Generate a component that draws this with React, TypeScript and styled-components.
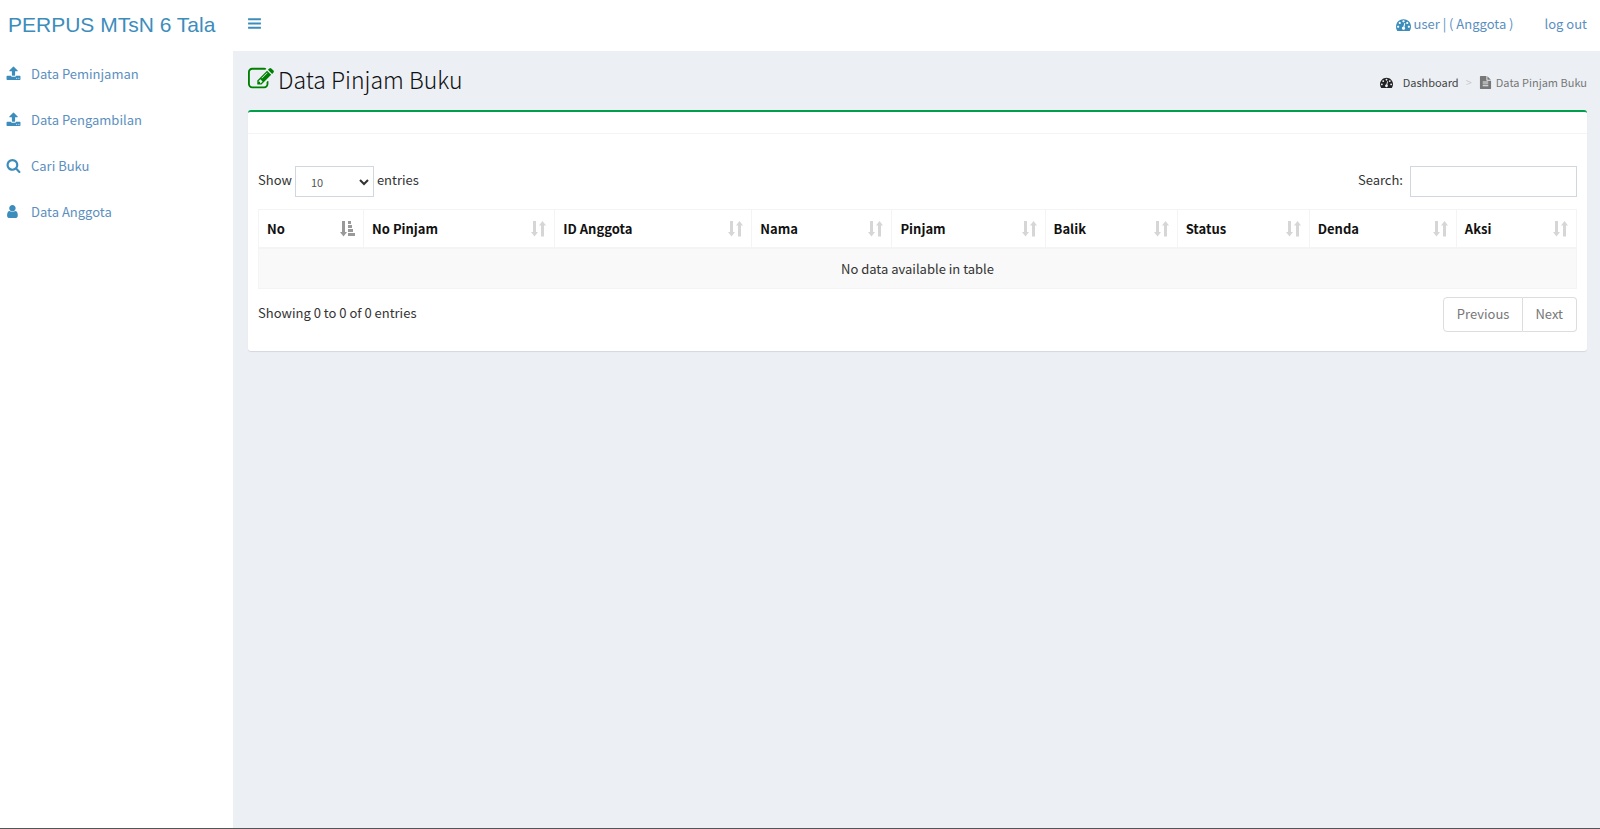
import React from "react";
import styled, { createGlobalStyle } from "styled-components";

const GlobalStyle = createGlobalStyle`
  * { box-sizing: border-box; }
  body {
    margin: 0;
    font-family: "Source Sans Pro", "Noto Sans CJK SC", "Noto Sans", sans-serif;
    font-size: 13px;
    line-height: 20px;
    color: #333;
  }
  a { text-decoration: none; }
`;

const Page = styled.div`
  min-height: 100vh;
  display: flex;
  flex-direction: column;
  background: #fff;
  border-bottom: 1px solid #555;
`;

const TopBar = styled.header`
  display: flex;
  align-items: center;
  height: 51px;
  padding-bottom: 2px;
  color: #3c8dbc;
`;

const Brand = styled.a`
  width: 233px;
  padding-left: 8px;
  font-family: "Liberation Sans", Arial, sans-serif;
  font-size: 21px;
  white-space: nowrap;
  color: #3c8dbc;
`;

const MenuButton = styled.button`
  display: flex;
  margin-right: auto;
  padding: 0 14px 2px;
  border: 0;
  background: none;
  color: inherit;
`;

const TopLink = styled.a`
  display: flex;
  align-items: center;
  gap: 3px;
  margin: 0 13px 1px 18px;
  color: #5b8fc0;
`;

const Body = styled.div`
  flex: 1;
  display: flex;
`;

const Sidebar = styled.nav`
  flex: none;
  width: 233px;
`;

const NavLink = styled.a`
  display: flex;
  align-items: center;
  gap: 10px;
  height: 46px;
  padding-left: 6px;
  color: #5b8fc0;
  svg {
    margin-bottom: 2px;
  }
`;

const Main = styled.main`
  flex: 1;
  min-width: 0;
  padding: 15px 13px 15px 15px;
  background: #ecf0f5;
`;

const TitleRow = styled.div`
  display: flex;
  align-items: center;
  justify-content: space-between;
  height: 28px;
  margin-bottom: 16px;
`;

const Title = styled.h1`
  display: flex;
  align-items: center;
  gap: 4px;
  margin: 0;
  padding-bottom: 2px;
  font-size: 23px;
  font-weight: 300;
  line-height: 28px;
  color: #111;
`;

const Crumbs = styled.ol`
  display: flex;
  align-items: center;
  gap: 7px;
  margin: 0;
  padding: 4px 0 0;
  list-style: none;
  font-size: 11px;
  color: #777;
`;

const Crumb = styled.li<{ $gap: number }>`
  display: flex;
  align-items: center;
  gap: ${(p) => p.$gap}px;
`;

const CrumbLink = styled.a`
  display: flex;
  align-items: center;
  gap: 10px;
  color: #444;
`;

const Separator = styled.span`
  color: #ccc;
`;

const Card = styled.section`
  border-top: 2px solid #00a04a;
  border-radius: 3px;
  background: #fff;
  box-shadow: 0 1px 1px rgba(0, 0, 0, 0.1);
`;

const CardHeader = styled.div`
  height: 22px;
  border-bottom: 1px solid #f4f4f4;
`;

const CardBody = styled.div`
  padding: 32px 10px 19px;
`;

const Bar = styled.div`
  display: flex;
  align-items: center;
  justify-content: space-between;
`;

const Field = styled.label<{ $gap: number }>`
  display: flex;
  align-items: center;
  gap: ${(p) => p.$gap}px;
`;

const BarText = styled.span`
  padding-bottom: 3px;
`;

const SelectWrap = styled.span`
  position: relative;
  display: flex;
`;

const Select = styled.select`
  appearance: none;
  width: 79px;
  height: 31px;
  padding: 0 15px;
  border: 1px solid #d2d6de;
  border-radius: 0;
  background: #fff;
  color: #555;
  font: inherit;
  font-size: 11px;
`;

const Chevron = styled.svg`
  position: absolute;
  right: 5px;
  top: 13px;
  pointer-events: none;
`;

const SearchInput = styled.input`
  width: 167px;
  height: 31px;
  border: 1px solid #d2d6de;
  padding: 4px 10px;
  font: inherit;
`;

const Table = styled.table`
  width: 100%;
  margin: 12px 0 8px;
  table-layout: fixed;
  border-collapse: separate;
  border-spacing: 0;
  border: 1px solid #f4f4f4;
  border-bottom: 0;
`;

const Col = styled.col<{ $w: number }>`
  width: ${(p) => p.$w}px;
`;

const Th = styled.th`
  height: 39px;
  padding: 0 8px;
  text-align: left;
  font-weight: 700;
  color: #111;
  border-bottom: 2px solid #f4f4f4;
  & + & {
    border-left: 1px solid #f4f4f4;
  }
`;

const HeadCell = styled.div`
  display: flex;
  align-items: center;
  justify-content: space-between;
`;

const EmptyCell = styled.td`
  height: 40px;
  padding: 0;
  text-align: center;
  background: #f9f9f9;
  border-bottom: 1px solid #f4f4f4;
`;

const Pager = styled.div`
  display: flex;
`;

const PageButton = styled.button`
  height: 35px;
  padding: 0 13px 2px;
  border: 1px solid #ddd;
  background: #fff;
  color: #777;
  font: inherit;
  &:first-child {
    border-radius: 4px 0 0 4px;
  }
  &:last-child {
    border-left: 0;
    padding-left: 12px;
    border-radius: 0 4px 4px 0;
  }
`;

const icons = {
  bars: "M1664 1344v128q0 26-19 45t-45 19h-1408q-26 0-45-19t-19-45v-128q0-26 19-45t45-19h1408q26 0 45 19t19 45zm0-512v128q0 26-19 45t-45 19h-1408q-26 0-45-19t-19-45v-128q0-26 19-45t45-19h1408q26 0 45 19t19 45zm0-512v128q0 26-19 45t-45 19h-1408q-26 0-45-19t-19-45v-128q0-26 19-45t45-19h1408q26 0 45 19t19 45z",
  upload:
    "M1344 1472q0-26-19-45t-45-19-45 19-19 45 19 45 45 19 45-19 19-45zm256 0q0-26-19-45t-45-19-45 19-19 45 19 45 45 19 45-19 19-45zm128-224v320q0 40-28 68t-68 28h-1472q-40 0-68-28t-28-68v-320q0-40 28-68t68-28h427q21 56 70.5 92t110.5 36h256q61 0 110.5-36t70.5-92h427q40 0 68 28t28 68zm-325-648q-17 40-59 40h-256v448q0 26-19 45t-45 19h-256q-26 0-45-19t-19-45v-448h-256q-42 0-59-40-17-39 14-69l448-448q18-19 45-19t45 19l448 448q31 30 14 69z",
  search:
    "M1216 832q0-185-131.5-316.5t-316.5-131.5-316.5 131.5-131.5 316.5 131.5 316.5 316.5 131.5 316.5-131.5 131.5-316.5zm512 832q0 52-38 90t-90 38q-54 0-90-38l-343-342q-179 124-399 124-143 0-273.5-55.5t-225-150-150-225-55.5-273.5 55.5-273.5 150-225 225-150 273.5-55.5 273.5 55.5 225 150 150 225 55.5 273.5q0 220-124 399l343 343q37 37 37 90z",
  user: "M1408 1399q0 109-62.5 187t-150.5 78h-854q-88 0-150.5-78t-62.5-187q0-85 8.5-160.5t31.5-152 58.5-131 94-89 134.5-34.5q131 128 313 128t313-128q76 0 134.5 34.5t94 89 58.5 131 31.5 152 8.5 160.5zm-256-887q0 159-112.5 271.5t-271.5 112.5-271.5-112.5-112.5-271.5 112.5-271.5 271.5-112.5 271.5 112.5 112.5 271.5z",
  edit: "M888 1184l116-116-152-152-116 116v56h96v96h56zm440-720q-16-16-33 1l-350 350q-17 17-1 33t33-1l350-350q17-17 1-33zm80 594v190q0 119-84.5 203.5t-203.5 84.5h-832q-119 0-203.5-84.5t-84.5-203.5v-832q0-119 84.5-203.5t203.5-84.5h832q63 0 117 25 15 7 18 23 3 17-9 29l-49 49q-14 14-32 8-23-6-45-6h-832q-66 0-113 47t-47 113v832q0 66 47 113t113 47h832q66 0 113-47t47-113v-126q0-13 9-22l64-64q15-15 35-7t20 29zm-96-738l288 288-672 672h-288v-288zm444 132l-92 92-288-288 92-92q28-28 68-28t68 28l152 152q28 28 28 68t-28 68z",
  dashboard:
    "M384 1152q0-53-37.5-90.5t-90.5-37.5-90.5 37.5-37.5 90.5 37.5 90.5 90.5 37.5 90.5-37.5 37.5-90.5zm192-448q0-53-37.5-90.5t-90.5-37.5-90.5 37.5-37.5 90.5 37.5 90.5 90.5 37.5 90.5-37.5 37.5-90.5zm428 481l101-382q6-26-7.5-48.5t-38.5-29.5-48 6.5-30 39.5l-101 382q-60 5-107 43.5t-63 98.5q-20 77 20 146t117 89 146-20 89-117q16-60-6-117t-72-91zm660-33q0-53-37.5-90.5t-90.5-37.5-90.5 37.5-37.5 90.5 37.5 90.5 90.5 37.5 90.5-37.5 37.5-90.5zm-640-640q0-53-37.5-90.5t-90.5-37.5-90.5 37.5-37.5 90.5 37.5 90.5 90.5 37.5 90.5-37.5 37.5-90.5zm448 192q0-53-37.5-90.5t-90.5-37.5-90.5 37.5-37.5 90.5 37.5 90.5 90.5 37.5 90.5-37.5 37.5-90.5zm320 448q0 261-141 483-19 29-54 29h-1402q-35 0-54-29-141-221-141-483 0-182 71-348t191-286 286-191 348-71 348 71 286 191 191 286 71 348z",
  file: "M1596 476q14 14 28 36h-472v-472q22 14 36 28zm-476 164h544v1056q0 40-28 68t-68 28h-1344q-40 0-68-28t-28-68v-1600q0-40 28-68t68-28h800v544q0 40 28 68t68 28zm160 736v-64q0-14-9-23t-23-9h-704q-14 0-23 9t-9 23v64q0 14 9 23t23 9h704q14 0 23-9t9-23zm0-256v-64q0-14-9-23t-23-9h-704q-14 0-23 9t-9 23v64q0 14 9 23t23 9h704q14 0 23-9t9-23zm0-256v-64q0-14-9-23t-23-9h-704q-14 0-23 9t-9 23v64q0 14 9 23t23 9h704q14 0 23-9t9-23z",
};

type IconName = keyof typeof icons;

function Icon({ name, size, color }: { name: IconName; size: number; color: string }) {
  return (
    <svg width={size} height={size} viewBox="0 0 1792 1792" fill={color} aria-hidden="true">
      <path d={icons[name]} />
    </svg>
  );
}

function SortIcon({ active }: { active: boolean }) {
  return active ? (
    <svg width="15" height="16" viewBox="0 0 15 16" fill="#999" aria-hidden="true">
      <path d="M2 0h3v11h2l-3.500 4.500L0 11h2zM8 0h3v3H8zM8 4h4v3H8zM8 8h5v3H8zM8 12h7v3H8z" />
    </svg>
  ) : (
    <svg width="15" height="16" viewBox="0 0 15 16" fill="#d6d6d6" aria-hidden="true">
      <path d="M2 0h3v11h2l-3.500 4.500L0 11h2zM10 15.500h3V4.500h2L11.500 0 8 4.500h2z" />
    </svg>
  );
}

const navItems: { icon: IconName; label: string }[] = [
  { icon: "upload", label: "Data Peminjaman" },
  { icon: "upload", label: "Data Pengambilan" },
  { icon: "search", label: "Cari Buku" },
  { icon: "user", label: "Data Anggota" },
];

const columns = [
  { label: "No", width: 104 },
  { label: "No Pinjam", width: 191 },
  { label: "ID Anggota", width: 197 },
  { label: "Nama", width: 140 },
  { label: "Pinjam", width: 153 },
  { label: "Balik", width: 132 },
  { label: "Status", width: 132 },
  { label: "Denda", width: 147 },
  { label: "Aksi", width: 120 },
];

export default function App() {
  return (
    <Page>
      <GlobalStyle />
      <TopBar>
        <Brand href="#">PERPUS MTsN 6 Tala</Brand>
        <MenuButton type="button" aria-label="Toggle navigation">
          <Icon name="bars" size={15} color="#3c8dbc" />
        </MenuButton>
        <TopLink href="#">
          <Icon name="dashboard" size={15} color="#3c8dbc" />
          user | ( Anggota )
        </TopLink>
        <TopLink href="#">log out</TopLink>
      </TopBar>
      <Body>
        <Sidebar>
          {navItems.map((item) => (
            <NavLink href="#" key={item.label}>
              <Icon name={item.icon} size={15} color="#3c8dbc" />
              {item.label}
            </NavLink>
          ))}
        </Sidebar>
        <Main>
          <TitleRow>
            <Title>
              <Icon name="edit" size={26} color="#008000" />
              Data Pinjam Buku
            </Title>
            <Crumbs>
              <Crumb $gap={7}>
                <CrumbLink href="#">
                  <Icon name="dashboard" size={13} color="#222" />
                  Dashboard
                </CrumbLink>
                <Separator>&gt;</Separator>
              </Crumb>
              <Crumb $gap={4}>
                <Icon name="file" size={13} color="#777" />
                Data Pinjam Buku
              </Crumb>
            </Crumbs>
          </TitleRow>
          <Card>
            <CardHeader />
            <CardBody>
              <Bar>
                <Field $gap={3}>
                  <BarText>Show</BarText>
                  <SelectWrap>
                    <Select defaultValue="10">
                      <option>10</option>
                      <option>25</option>
                      <option>50</option>
                      <option>100</option>
                    </Select>
                    <Chevron width="10" height="7" viewBox="0 0 10 7" fill="none" stroke="#333" strokeWidth="2">
                      <path d="M1 1l4 4 4-4" />
                    </Chevron>
                  </SelectWrap>
                  <BarText>entries</BarText>
                </Field>
                <Field $gap={7}>
                  <BarText>Search:</BarText>
                  <SearchInput type="search" />
                </Field>
              </Bar>
              <Table>
                <colgroup>
                  {columns.map((c) => (
                    <Col key={c.label} $w={c.width} />
                  ))}
                </colgroup>
                <thead>
                  <tr>
                    {columns.map((c, i) => (
                      <Th key={c.label} scope="col">
                        <HeadCell>
                          {c.label}
                          <SortIcon active={i === 0} />
                        </HeadCell>
                      </Th>
                    ))}
                  </tr>
                </thead>
                <tbody>
                  <tr>
                    <EmptyCell colSpan={columns.length}>No data available in table</EmptyCell>
                  </tr>
                </tbody>
              </Table>
              <Bar>
                <BarText>Showing 0 to 0 of 0 entries</BarText>
                <Pager>
                  <PageButton type="button">Previous</PageButton>
                  <PageButton type="button">Next</PageButton>
                </Pager>
              </Bar>
            </CardBody>
          </Card>
        </Main>
      </Body>
    </Page>
  );
}
